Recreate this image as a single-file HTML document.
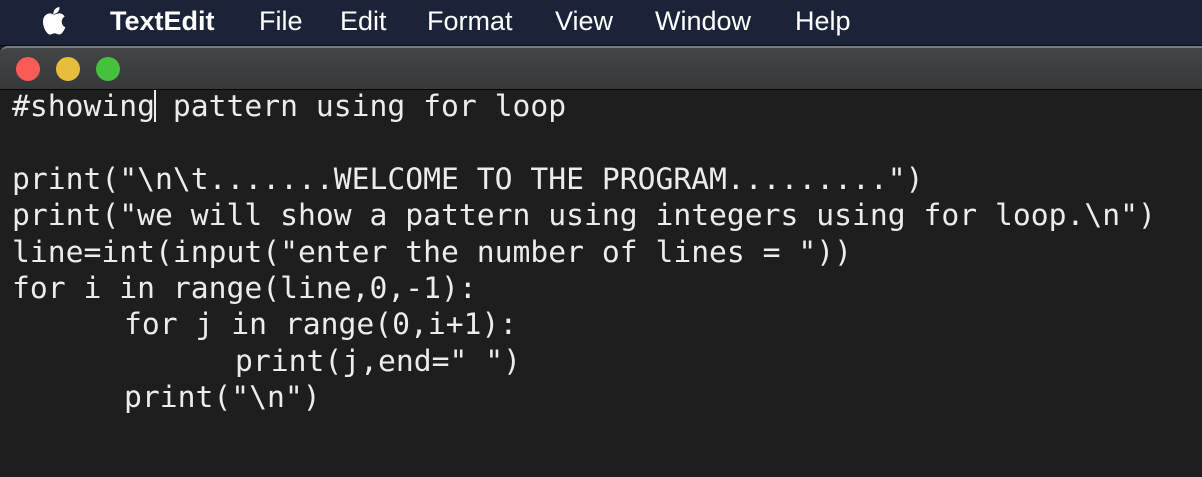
<!DOCTYPE html>
<html><head><meta charset="utf-8"><style>
html,body{margin:0;padding:0;width:1202px;height:477px;overflow:hidden;background:#1e1e1e;}
.menu{position:absolute;left:0;top:0;width:1202px;height:45px;background:#1b2339;border-bottom:1px solid #0b0f18;}
.menu span{position:absolute;top:6px;font:27px "Liberation Sans",sans-serif;color:#fff;}
.win{position:absolute;left:0;top:46px;width:1202px;height:431px;}
.title{position:absolute;left:0;top:0;width:1202px;height:41px;background:linear-gradient(#424446,#37393b);border-top:2px solid #7a7b7d;border-bottom:1px solid #050505;border-radius:8px 0 0 0;}
.dot{position:absolute;top:9px;width:24px;height:24px;border-radius:50%;}
.code{position:absolute;left:12px;top:89px;font:29.7px/36.4px "DejaVu Sans Mono",monospace;color:#ececec;white-space:pre;}
.cursor{display:inline-block;width:2px;height:32px;background:#ececec;vertical-align:-6px;margin:0 -1px;}
</style></head><body>
<div class="menu">
<svg style="position:absolute;left:43px;top:7px" width="24" height="28" viewBox="0 0 24 28"><path fill="#fff" d="M16.5 0c.2 2-.6 3.8-1.7 5-1.1 1.2-2.8 2.1-4.4 2-.2-1.9.7-3.8 1.7-4.9C13.2.9 15 .1 16.5 0zM21.7 9.5c-.2.1-3 1.8-3 5.3 0 4.1 3.6 5.500 3.600 5.500s-.6 1.9-1.9 3.8c-1.2 1.7-2.4 3.4-4.3 3.4-1.9 0-2.4-1.1-4.5-1.1-2.1 0-2.8 1.1-4.5 1.2-1.8.1-3.2-1.9-4.4-3.6C.5 20.5-1.3 14.2 1.2 9.9 2.4 7.8 4.6 6.5 6.9 6.4c1.8 0 3.4 1.2 4.5 1.2 1.1 0 3-1.4 5.1-1.2.9 0 3.4.4 5.2 3.1z"/></svg>
<span style="left:110px;font-weight:bold">TextEdit</span>
<span style="left:259px">File</span>
<span style="left:340px">Edit</span>
<span style="left:427px">Format</span>
<span style="left:555px">View</span>
<span style="left:655px">Window</span>
<span style="left:795px">Help</span>
</div>
<div class="win">
<div class="title">
<div class="dot" style="left:16px;background:#fd5b55"></div>
<div class="dot" style="left:56px;background:#e8bd3c"></div>
<div class="dot" style="left:96px;background:#45c13c"></div>
</div>
</div>
<div class="code">#showing<span class="cursor"></span> pattern using for loop

print("\n\t.......WELCOME TO THE PROGRAM.........")
print("we will show a pattern using integers using for loop.\n")
line=int(input("enter the number of lines = "))
for i in range(line,0,-1):
<span style="margin-left:112px">for j in range(0,i+1):</span>
<span style="margin-left:223px">print(j,end=" ")</span>
<span style="margin-left:112px">print("\n")</span></div>
</body></html>
